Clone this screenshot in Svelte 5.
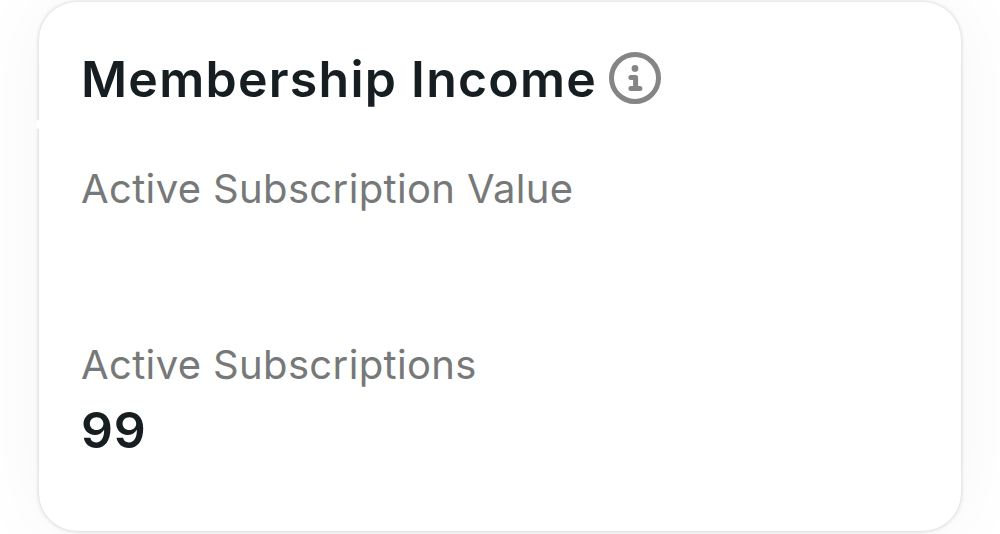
<script lang="ts">
  type Stat = { label: string; value: string };

  const title = "Membership Income";
  const stats: Stat[] = [
    { label: "Active Subscription Value", value: "" },
    { label: "Active Subscriptions", value: "99" },
  ];
</script>

<main>
  <section class="card">
    <header>
      <h1>{title}</h1>
      <svg class="info" viewBox="0 0 52 52" role="img" aria-label="Info">
        <circle cx="26" cy="26" r="23.5" />
        <circle class="dot" cx="26" cy="16.4" r="3.4" />
        <path d="M21.9 25.6H26.6V36.4M21.9 36.4H30.9" />
      </svg>
    </header>
    {#each stats as stat}
      <div class="stat">
        <div class="label">{stat.label}</div>
        <div class="value">{stat.value}</div>
      </div>
    {/each}
    <span class="notch"></span>
  </section>
</main>

<style>
  :global(body) {
    background: #fff;
    overflow: hidden;
  }
  main {
    box-sizing: border-box;
    height: 534px;
    padding: 2px 39px 3px;
    overflow: hidden;
    font-family: Inter, "Open Sans", sans-serif;
  }
  .card {
    position: relative;
    box-sizing: border-box;
    height: 529px;
    padding: 47px 42px 0;
    border-radius: 38px;
    background: #fff;
    box-shadow:
      0 0 3px 1px rgba(0, 0, 0, 0.09),
      0 1px 6px rgba(0, 0, 0, 0.05),
      0 0 80px rgba(0, 0, 0, 0.045);
  }
  header {
    display: flex;
    align-items: center;
    gap: 14px;
    height: 60px;
    margin-bottom: 50px;
  }
  h1 {
    width: 514px;
    margin: 0;
    font-size: 50px;
    font-weight: 600;
    letter-spacing: 1.25px;
    line-height: 60px;
    white-space: nowrap;
    color: #161e22;
  }
  .info {
    width: 52px;
    height: 52px;
    margin-top: -2px;
    fill: none;
    stroke: #858585;
    stroke-width: 5;
    stroke-linecap: round;
    stroke-linejoin: round;
  }
  .info .dot {
    fill: #858585;
    stroke: none;
  }
  .stat {
    height: 176px;
  }
  .label {
    height: 60px;
    font-size: 40px;
    letter-spacing: 0.36px;
    line-height: 60px;
    white-space: nowrap;
    color: #777979;
  }
  .value {
    height: 60px;
    margin-top: 5px;
    font-size: 50px;
    font-weight: 600;
    letter-spacing: 0.8px;
    line-height: 60px;
    color: #161e22;
  }
  .notch {
    position: absolute;
    top: 118px;
    left: -3px;
    width: 6px;
    height: 9px;
    border-radius: 3px;
    background: #fff;
  }
</style>
